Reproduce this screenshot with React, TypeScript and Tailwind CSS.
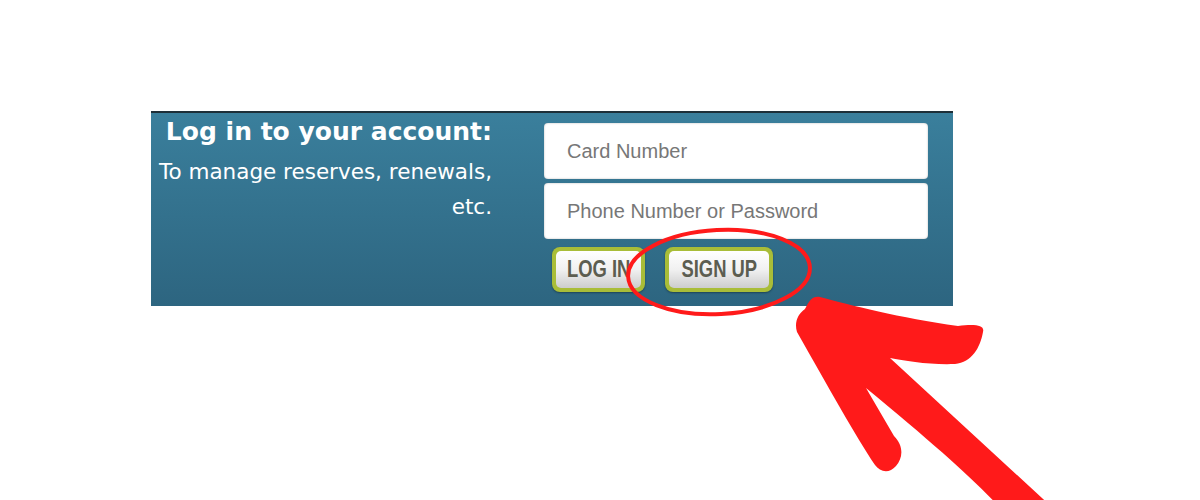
import React from "react";

function Btn({ label, w }: { label: string; w: string }) {
  return (
    <div
      className={`${w} h-[45px] rounded-[8px] bg-[#a9bd38] p-[4px] shadow-[0_1px_2px_rgba(0,0,0,0.35)]`}
    >
      <div className="flex h-full w-full items-center justify-center rounded-[5px] bg-linear-to-b from-[#ffffff] via-[#f1f1f1] to-[#cdcdcd]">
        <span className="inline-block scale-x-[0.8] whitespace-nowrap text-[23px] font-bold leading-none text-[#5c5d50] [font-family:'Liberation_Sans',Arial,sans-serif]">
          {label}
        </span>
      </div>
    </div>
  );
}

export default function App() {
  return (
    <div className="relative h-[500px] w-[1200px] overflow-hidden bg-white">
      <div className="ml-[151px] mt-[111px] flex h-[195px] w-[802px] border-t-2 border-[#1d2f38] bg-linear-to-b from-[#3a7f9c] to-[#2d6580]">
        <div className="w-[341px] pt-[4px] text-right text-white [font-family:'DejaVu_Sans',Verdana,sans-serif]">
          <div className="text-[25px] font-bold leading-[30px]">Log in to your account:</div>
          <div className="mt-[7px] text-[21.5px] leading-[35px]">
            To manage reserves, renewals,
            <br />
            etc.
          </div>
        </div>
        <div className="ml-[52px] flex w-[384px] flex-col pt-[10px]">
          <input
            className="h-[56px] w-full rounded-[4px] bg-white pl-[23px] text-[20px] text-[#555] shadow-[inset_0_0_2px_rgba(0,0,0,0.3)] outline-none placeholder:text-[#777] [font-family:'Liberation_Sans',Arial,sans-serif]"
            placeholder="Card Number"
          />
          <input
            className="mt-[4px] h-[56px] w-full rounded-[4px] bg-white pl-[23px] text-[20px] text-[#555] shadow-[inset_0_0_2px_rgba(0,0,0,0.3)] outline-none placeholder:text-[#777] [font-family:'Liberation_Sans',Arial,sans-serif]"
            placeholder="Phone Number or Password"
          />
          <div className="ml-[8px] mt-[8px] flex gap-[20px]">
            <Btn label="LOG IN" w="w-[93px]" />
            <Btn label="SIGN UP" w="w-[108px]" />
          </div>
        </div>
      </div>

      <svg
        className="pointer-events-none absolute left-0 top-0"
        width="1200"
        height="500"
        viewBox="0 0 1200 500"
      >
        <ellipse
          cx="719"
          cy="272"
          rx="91"
          ry="42"
          transform="rotate(-3 719 272)"
          fill="none"
          stroke="#ff1a1a"
          strokeWidth="4"
        />
        <path
          d="M 820 297 C 850 305, 900 318, 958 326 C 975 324, 985 325, 983 332 C 980 348, 972 362, 955 364 C 930 365, 905 361, 890 358 L 1055 510 L 1002 510 C 975 480, 935 445, 866 388 L 894 436 C 904 446, 903 458, 896 466 C 889 474, 880 472, 875 465 C 855 435, 830 390, 797 332 C 794 322, 798 314, 805 309 C 810 300, 812 296, 820 297 Z"
          fill="#ff1a1a"
        />
      </svg>
    </div>
  );
}
